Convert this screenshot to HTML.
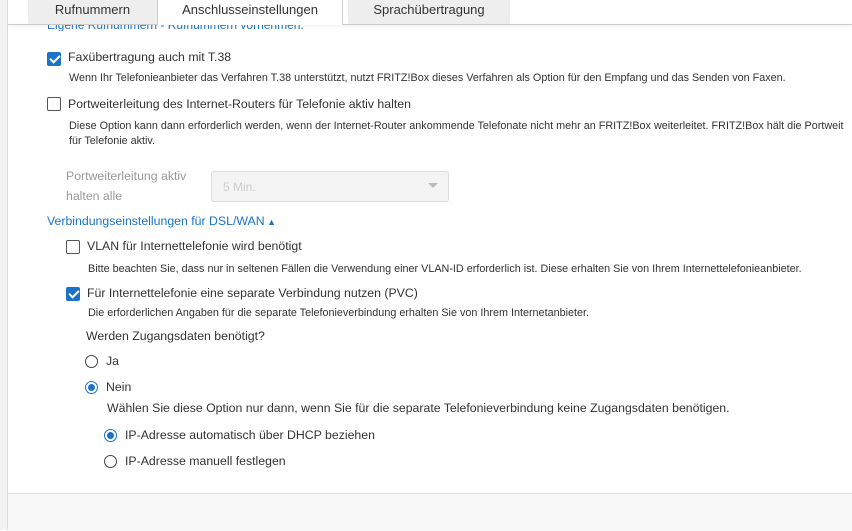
<!DOCTYPE html>
<html><head><meta charset="utf-8"><style>
body{margin:0;width:852px;height:530px;overflow:hidden;background:#fff;font-family:"Liberation Sans",sans-serif;color:#333;position:relative}
.a{position:absolute;white-space:nowrap}
.l{font-size:12.3px;color:#333}
.d{font-size:10.8px;color:#333}
.cb{position:absolute;width:12px;height:12px;border:1.5px solid #555;border-radius:2px;background:#fff}
.cb.on{background:#1a73c8;border-color:#1a73c8}
.cb.on::after{content:"";position:absolute;left:3.5px;top:0px;width:4px;height:8px;border:solid #fff;border-width:0 2px 2px 0;transform:rotate(45deg)}
.rb{position:absolute;width:11px;height:11px;border:1.5px solid #444;border-radius:50%;background:#fff}
.rb.on{border-color:#1a73c8}
.rb.on::after{content:"";position:absolute;left:2px;top:2px;width:7px;height:7px;border-radius:50%;background:#1a73c8}
</style></head><body>
<div class="a" style="left:0;top:0;width:7px;height:530px;background:#f3f3f3;border-right:1px solid #ddd"></div>
<div class="a" style="left:8px;top:24px;width:844px;height:1px;background:#ccc;box-shadow:0 1px 3px rgba(0,0,0,.15)"></div>
<div class="a" style="left:28px;top:0;width:129px;height:24px;background:#eee;font-size:13px;text-align:center;line-height:20px">Rufnummern</div>
<div class="a" style="left:157px;top:0;width:184px;height:25px;background:#fff;border:1px solid #ccc;border-top:0;border-bottom:0;font-size:13px;text-align:center;line-height:20px">Anschlusseinstellungen</div>
<div class="a" style="left:348px;top:0;width:162px;height:24px;background:#eee;font-size:13px;text-align:center;line-height:20px">Sprachübertragung</div>
<div class="a" style="left:47px;top:25px;height:6px;overflow:hidden;font-size:12px;color:#1a73c8;line-height:0">Eigene Rufnummern - Rufnummern vornehmen.</div>

<div class="cb on" style="left:47px;top:52px"></div>
<div class="a l" style="left:68px;top:50px">Faxübertragung auch mit T.38</div>
<div class="a d" style="left:69px;top:72px">Wenn Ihr Telefonieanbieter das Verfahren T.38 unterstützt, nutzt FRITZ!Box dieses Verfahren als Option für den Empfang und das Senden von Faxen.</div>
<div class="cb" style="left:47px;top:97px"></div>
<div class="a l" style="left:68px;top:97px">Portweiterleitung des Internet-Routers für Telefonie aktiv halten</div>
<div class="a d" style="left:69px;top:120px">Diese Option kann dann erforderlich werden, wenn der Internet-Router ankommende Telefonate nicht mehr an FRITZ!Box weiterleitet. FRITZ!Box hält die Portweit</div>
<div class="a d" style="left:69px;top:135px">für Telefonie aktiv.</div>
<div class="a" style="left:66px;top:166px;font-size:12.3px;color:#999;line-height:20px">Portweiterleitung aktiv<br>halten alle</div>
<div class="a" style="left:211px;top:171px;width:236px;height:29px;background:#f4f4f4;border:1px solid #ddd;border-radius:3px"><span class="a" style="left:11px;top:8px;font-size:12px;color:#ccc">5 Min.</span><span class="a" style="right:10px;top:11px;border:5px solid transparent;border-top-color:#bbb;border-bottom:0"></span></div>
<div class="a" style="left:47px;top:214px;font-size:12.3px;color:#1a73c8">Verbindungseinstellungen für DSL/WAN<span style="font-size:9px"> ▲</span></div>

<div class="cb" style="left:66px;top:240px"></div>
<div class="a l" style="left:87px;top:239px">VLAN für Internettelefonie wird benötigt</div>
<div class="a d" style="left:88px;top:263px">Bitte beachten Sie, dass nur in seltenen Fällen die Verwendung einer VLAN-ID erforderlich ist. Diese erhalten Sie von Ihrem Internettelefonieanbieter.</div>
<div class="cb on" style="left:66px;top:287px"></div>
<div class="a l" style="left:87px;top:286px">Für Internettelefonie eine separate Verbindung nutzen (PVC)</div>
<div class="a d" style="left:88px;top:307px">Die erforderlichen Angaben für die separate Telefonieverbindung erhalten Sie von Ihrem Internetanbieter.</div>
<div class="a l" style="left:86px;top:329px">Werden Zugangsdaten benötigt?</div>
<div class="rb" style="left:85px;top:355px"></div>
<div class="a l" style="left:106px;top:354px">Ja</div>
<div class="rb on" style="left:85px;top:381px"></div>
<div class="a l" style="left:106px;top:380px">Nein</div>
<div class="a l" style="left:107px;top:401px">Wählen Sie diese Option nur dann, wenn Sie für die separate Telefonieverbindung keine Zugangsdaten benötigen.</div>
<div class="rb on" style="left:104px;top:429px"></div>
<div class="a l" style="left:125px;top:428px">IP-Adresse automatisch über DHCP beziehen</div>
<div class="rb" style="left:104px;top:455px"></div>
<div class="a l" style="left:125px;top:454px">IP-Adresse manuell festlegen</div>
<div class="a" style="left:8px;top:493px;width:844px;height:37px;background:#f8f8f8;border-top:1px solid #ddd"></div>
</body></html>
